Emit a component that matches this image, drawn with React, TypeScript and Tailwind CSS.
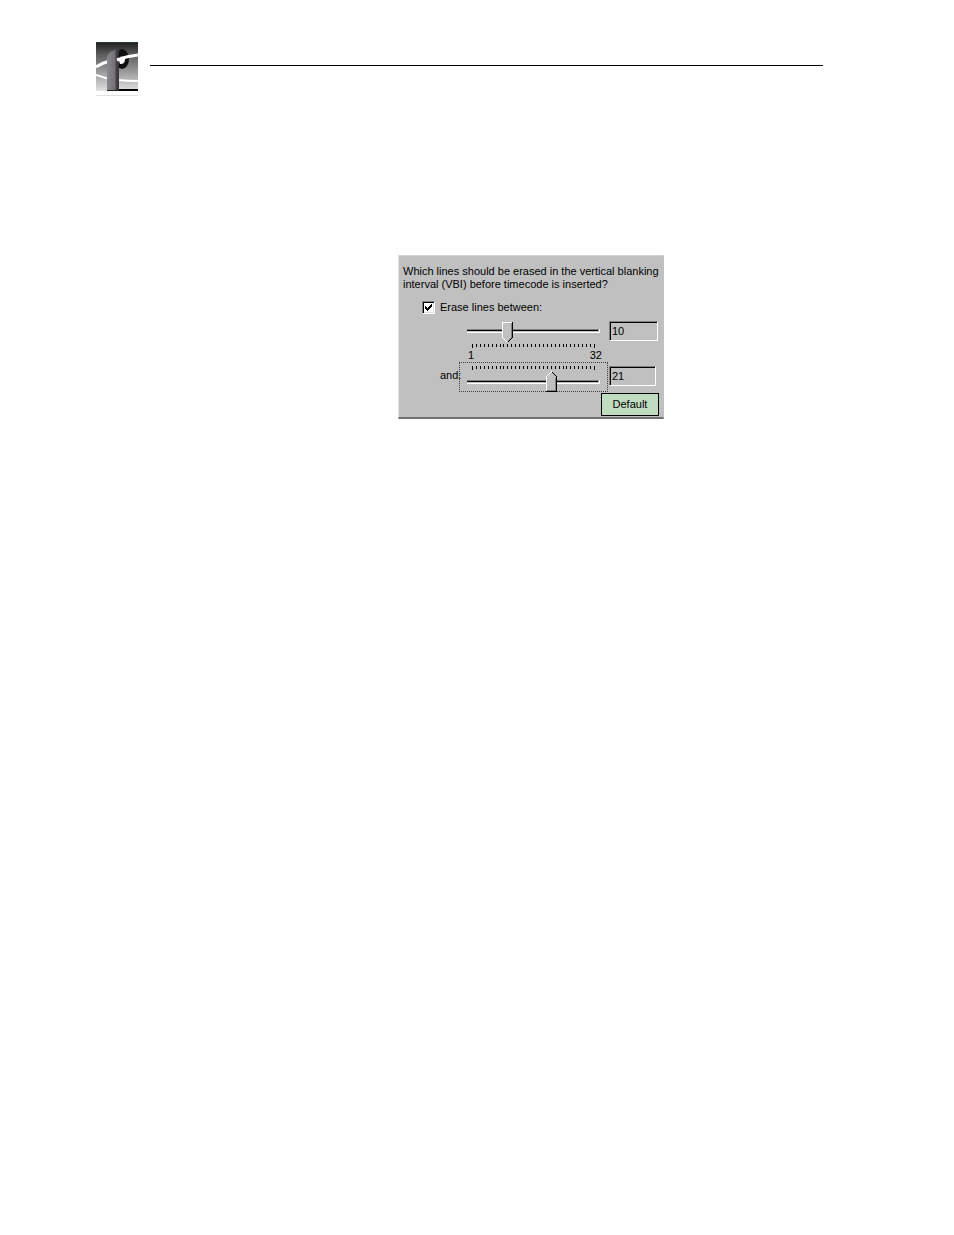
import React, { useState } from 'react';

const MIN_LINE = 1;
const MAX_LINE = 32;
const DEFAULT_FROM = 10;
const DEFAULT_TO = 21;

const TICK_START = 13;
const TICK_SPAN = 122;

const tickX = (value: number) =>
  TICK_START + Math.round(((value - MIN_LINE) * TICK_SPAN) / (MAX_LINE - MIN_LINE));

const Logo: React.FC = () => (
  <svg className="w-[42px] h-[54px] flex-shrink-0" viewBox="0 0 42 54" role="img" aria-label="Logo">
    <defs>
      <linearGradient id="sky" x1="0" y1="0" x2="0" y2="1">
        <stop offset="0" stopColor="#1c1c1c" />
        <stop offset="0.25" stopColor="#5c5c5c" />
        <stop offset="0.6" stopColor="#999999" />
        <stop offset="1" stopColor="#e0e0e0" />
      </linearGradient>
      <linearGradient id="post" x1="0" y1="0" x2="1" y2="0">
        <stop offset="0" stopColor="#8a898c" />
        <stop offset="0.6" stopColor="#737175" />
        <stop offset="0.7" stopColor="#454347" />
        <stop offset="1" stopColor="#302e32" />
      </linearGradient>
    </defs>
    <rect width="42" height="49" fill="url(#sky)" />
    <rect width="42" height="1" fill="#1f3434" />
    <path d="M0 33Q10 37 21 38Q32 39 42 39" fill="none" stroke="#fff" strokeWidth="2" />
    <path d="M0 25Q6 21 14 19" fill="none" stroke="#fff" strokeWidth="3" />
    <ellipse cx="26" cy="17" rx="7" ry="10" fill="#110e12" />
    <ellipse cx="26" cy="18" rx="3" ry="4" fill="#6a676d" />
    <path d="M23 18L29 16Q29 22 24 22Z" fill="#fff" />
    <path d="M11 48V17Q11 10 19 8L24 8Q22 11 23 18V49H12Z" fill="url(#post)" />
    <path d="M21 18Q31 14 42 13" fill="none" stroke="#fff" strokeWidth="3" />
    <path d="M11 48H23V49H11Z" fill="#222" />
    <rect x="23" y="47" width="19" height="2" fill="#000" />
    <rect y="53" width="42" height="1" fill="#e2e2e2" />
  </svg>
);

interface LineSliderProps {
  label: string;
  value: number;
  ticksAbove?: boolean;
  onChange: (value: number) => void;
}

const LineSlider: React.FC<LineSliderProps> = ({ label, value, ticksAbove, onChange }) => {
  const x = tickX(value) - 5;
  const trackY = ticksAbove ? 18 : 8;
  const tickY = ticksAbove ? 4 : 23;
  const ticks = Array.from({ length: MAX_LINE }, (_, i) => i + 1);

  return (
    <div className="relative h-[30px]">
      <svg className="block w-[149px] h-[30px]" viewBox="0 0 149 30" shapeRendering="crispEdges" aria-hidden="true">
        <rect x="8" y={trackY} width="133" height="4" fill="#fff" />
        <rect x="8" y={trackY} width="132" height="3" fill="#c0c0c0" />
        <rect x="8" y={trackY} width="132" height="1" fill="#808080" />
        <rect x="8" y={trackY + 1} width="131" height="1" fill="#000" />
        {ticks.map((tick) => (
          <rect key={tick} x={tickX(tick)} y={tickY} width="1" height={tick === MIN_LINE || tick === MAX_LINE ? 4 : 3} fill="#000" />
        ))}
        {ticksAbove ? (
          <g transform={`translate(${x} 9)`} fill="none">
            <path d="M0 21V6L5 0H6L11 6V21Z" fill="#c0c0c0" />
            <path d="M9.5 7V19.5H1" stroke="#808080" />
            <path d="M5.5 0.5L10.5 5.5V20.5H0" stroke="#000" />
            <path d="M0.5 20V5.5L5.5 0.5" stroke="#fff" />
          </g>
        ) : (
          <g transform={`translate(${x} 1)`} fill="none">
            <path d="M0 0H11V16L6 21H5L0 16Z" fill="#c0c0c0" />
            <path d="M9.5 1V15.5L5.5 19.5" stroke="#808080" />
            <path d="M10.5 0V15.5L5.5 20.5" stroke="#000" />
            <path d="M10 0.5H0.5V15.5L5.5 20.5" stroke="#fff" />
          </g>
        )}
      </svg>
      <input
        type="range"
        aria-label={label}
        min={MIN_LINE}
        max={MAX_LINE}
        value={value}
        onChange={(e) => onChange(Number(e.target.value))}
        className="absolute inset-0 w-full h-full px-2 opacity-0 cursor-default"
      />
    </div>
  );
};

interface LineFieldProps {
  label: string;
  value: number;
  className: string;
}

const LineField: React.FC<LineFieldProps> = ({ label, value, className }) => (
  <div className={`h-5 border border-t-[#808080] border-l-[#808080] border-r-white border-b-white ${className}`}>
    <input
      type="text"
      aria-label={label}
      value={value}
      readOnly
      className="block w-full h-full pl-px pb-px border-t border-l border-black bg-[#c0c0c0] outline-none"
    />
  </div>
);

const VbiPanel: React.FC = () => {
  const [erase, setErase] = useState(true);
  const [from, setFrom] = useState(DEFAULT_FROM);
  const [to, setTo] = useState(DEFAULT_TO);

  const reset = () => {
    setErase(true);
    setFrom(DEFAULT_FROM);
    setTo(DEFAULT_TO);
  };

  return (
    <section className="w-[266px] pt-[9px] pb-px pl-1 pr-1 bg-[#c0c0c0] border border-t-[#d4d4d4] border-l-[#e4e4e4] border-r-[#c0c0c0] border-b-2 border-b-[#707070] text-[11px] leading-[13px]">
      <p className="whitespace-nowrap">
        Which lines should be erased in the vertical blanking
        <br />
        interval (VBI) before timecode is inserted?
      </p>

      <label className="flex items-center gap-[5px] mt-2.5 ml-[19px]">
        <span className="relative w-[13px] h-[13px]">
          <input
            type="checkbox"
            checked={erase}
            onChange={(e) => setErase(e.target.checked)}
            className="block appearance-none w-[13px] h-[13px] bg-white border border-t-[#808080] border-l-[#808080] border-r-white border-b-white shadow-[inset_1px_1px_0_#000,inset_-1px_-1px_0_#dfdfdf]"
          />
          {erase && (
            <svg className="absolute inset-0 pointer-events-none" width="13" height="13" viewBox="0 0 13 13" shapeRendering="crispEdges">
              <path d="M3 5H4V6H5V7H6V6H7V5H8V4H9V3H10V6H9V7H8V8H7V9H6V10H5V9H4V8H3Z" fill="#000" />
            </svg>
          )}
        </span>
        Erase lines between:
      </label>

      <div className="grid grid-cols-[19px_149px_1fr] ml-[37px] mt-[7px]">
        <div className="col-start-2">
          <LineSlider label="First line" value={from} onChange={setFrom} />
          <div className="flex justify-between pl-[9px] pr-[6px] pb-0.5 leading-[9px]">
            <span>{MIN_LINE}</span>
            <span>{MAX_LINE}</span>
          </div>
        </div>
        <LineField label="First line number" value={from} className="w-[49px] ml-px" />

        <span className="pt-[7px]">and:</span>
        <div className="outline-1 outline-dotted -outline-offset-1 outline-[#404040]">
          <LineSlider label="Last line" value={to} ticksAbove onChange={setTo} />
        </div>
        <LineField label="Last line number" value={to} className="w-[47px] ml-px mt-1" />
      </div>

      <div className="flex justify-end mt-px">
        <button
          type="button"
          onClick={reset}
          className="w-[58px] h-[23px] bg-[#c0dcc0] border border-black"
        >
          Default
        </button>
      </div>
    </section>
  );
};

const App: React.FC = () => (
  <div className="min-h-screen bg-white text-black font-['Liberation_Sans',Arial,sans-serif]">
    <header className="flex items-start gap-3 pt-[42px] pl-24 pr-[131px]">
      <Logo />
      <hr className="flex-1 mt-[23px] border-t border-black" />
    </header>
    <main className="pt-[159px] pl-[398px]">
      <VbiPanel />
    </main>
  </div>
);

export default App;
